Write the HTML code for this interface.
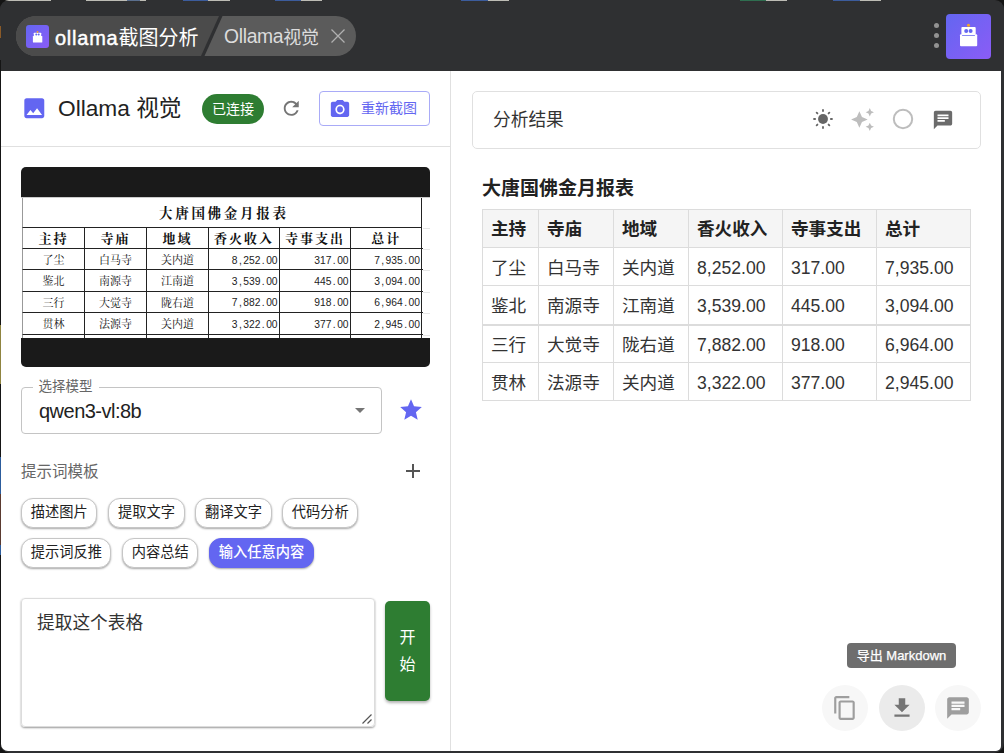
<!DOCTYPE html>
<html lang="zh-CN">
<head>
<meta charset="utf-8">
<title>Ollama视觉</title>
<style>
*{box-sizing:border-box;margin:0;padding:0}
html,body{width:1004px;height:753px;overflow:hidden;background:#141414}
body{font-family:"Liberation Sans","Noto Sans CJK SC",sans-serif;color:#333;position:relative}
.abs{position:absolute}
#win{position:absolute;left:0;top:0;width:1004px;height:753px;background:#2f3032;border-radius:9px 9px 10px 10px;overflow:hidden}
#topbleed{position:absolute;left:0;top:0;width:1004px;height:1px}
#titlebar{position:absolute;left:0;top:1px;width:1004px;height:70px;background:#2f3032;border-radius:9px 9px 0 0}
#content{position:absolute;left:1px;top:71px;width:1000px;height:680px;background:#fff;border-radius:0 0 5px 7px;overflow:hidden}
/* title pill */
#pill{position:absolute;left:16px;top:16px;width:340px;height:40px;border-radius:20px;background:#5b5b5b;overflow:hidden}
#pill .seg1{position:absolute;left:0;top:0;width:205px;height:40px;background:#4b4b4b;transform-origin:0 0}
#pill svg{position:absolute;left:0;top:0}
.t1{position:absolute;left:55px;top:23.600px;font-size:20px;line-height:28px;color:#fff;font-weight:400;white-space:nowrap}
.t1 b{font-weight:400;-webkit-text-stroke:0.45px #fff;letter-spacing:0.75px}
.t2{position:absolute;left:224px;top:24px;font-size:18px;line-height:26px;color:#dcdcdc;white-space:nowrap}
.t2 b{font-weight:400;font-size:19.300px;letter-spacing:-0.300px}
.t2 i{font-style:normal;position:relative;top:1px;letter-spacing:-0.300px}
#appico{position:absolute;left:26px;top:25px;width:23px;height:23px;border-radius:3px;background:linear-gradient(135deg,#6366f1,#8b5cf6)}
#bigico{position:absolute;left:946px;top:14px;width:45px;height:45px;border-radius:4px;background:linear-gradient(135deg,#6366f1,#8b5cf6)}
.dot{position:absolute;width:5.200px;height:5.200px;border-radius:50%;background:#929292;left:934.200px}
/* left panel */
#left{position:absolute;left:0;top:0;width:450px;height:680px;border-right:1px solid #e0e0e0}
#lhead{position:absolute;left:0;top:0;width:450px;height:76px;border-bottom:1px solid #e0e0e0}
.h1{position:absolute;left:57px;top:22px;font-size:22.700px;line-height:30px;color:#222;white-space:nowrap}
.badge{position:absolute;left:201px;top:23px;width:62px;height:30px;border-radius:15px;background:#2e7d32;color:#fff;font-size:14px;line-height:30px;text-align:center}
.btn-o{position:absolute;left:318px;top:20px;width:111px;height:35px;border:1px solid #a9abf7;border-radius:4px;color:#6366f1;font-size:14px;line-height:33px;padding-left:41px;white-space:nowrap}

#shot{position:absolute;left:20px;top:96px;width:409px;height:200px;border-radius:5px;background:#1a1a1a;overflow:hidden}
.sheet{position:absolute;left:0;top:30px;width:409px;height:141px;background:#fff;overflow:hidden;font-family:"Noto Serif CJK SC","Liberation Serif",serif;color:#111;border-top:1px solid #ccc}
.gl{position:absolute;left:401.500px;width:8px;height:1px;background:#e6e6e6}
.srow{position:relative;height:21.4px;white-space:nowrap;font-size:11px;line-height:20px;border-bottom:1px solid #222;width:400.500px;margin-left:1px;border-left:1px solid #999}
.stitle{height:29.700px;line-height:29px;font-size:13.500px;font-weight:700;letter-spacing:2.700px;text-align:left;padding-left:136px;border-right:1.500px solid #222;width:399.700px}
.shead{font-weight:700;font-size:13px;letter-spacing:2px}
.c{position:absolute;top:0;height:100%;border-right:1.5px solid #222;text-align:center;overflow:hidden}
.c1{left:0;width:62.100px}.c2{left:62.100px;width:62px}.c3{left:124.100px;width:62px}.c4{left:186.100px;width:71px}.c5{left:257.100px;width:71px}.c6{left:328.100px;width:71.400px}
.c.n{text-align:right;font-family:"Liberation Sans",sans-serif;font-size:10.300px;padding-right:1.500px;color:#222}
.c.n i{display:inline-block;font-style:normal;transform:scaleY(1.1);transform-origin:50% 50%;position:relative;top:1.500px}
.c.n u{display:inline-block;width:5.730px;text-align:center;text-decoration:none}
#sel{position:absolute;left:20px;top:316px;width:361px;height:47px;border:1px solid #c4c4c4;border-radius:4px}
#sel .lbl{position:absolute;left:10.500px;top:-10.500px;padding:0 6px;background:#fff;font-size:13.500px;line-height:18px;color:#666}
#sel .val{position:absolute;left:17px;top:9.500px;font-size:20px;letter-spacing:-0.520px;line-height:26px;color:#222}
.ptitle{position:absolute;left:20px;top:390px;font-size:15.500px;line-height:22px;color:#666}
.chip{position:absolute;height:30px;border:1px solid #c6c6c6;border-radius:12px;background:#fff;font-size:14.250px;line-height:27px;text-align:center;color:#222;box-shadow:0 1px 2px rgba(0,0,0,.35);white-space:nowrap}
.chip.on{background:#6366f1;border-color:#6366f1;color:#fff;font-weight:500}
#ta{position:absolute;left:20px;top:527px;width:354px;height:129px;border:1px solid #dcdcdc;border-radius:4px;box-shadow:0 1px 2px rgba(0,0,0,.4);font-size:17.700px;line-height:26px;padding:11px 15px;color:#333}
#go{position:absolute;left:384px;top:530px;width:45px;height:100px;border-radius:5px;background:#2e7d32;color:#fff;font-size:16px;line-height:27px;text-align:center;padding-top:23px;box-shadow:0 2px 3px rgba(0,0,0,.3)}

#right{position:absolute;left:0;top:0;width:1000px;height:680px}
#card{position:absolute;left:471px;top:20px;width:509px;height:58px;border:1px solid #e0e0e0;border-radius:5px;background:#fff}
#card .ct{position:absolute;left:20px;top:15px;font-size:17.700px;line-height:26px;color:#333}
.rtitle{position:absolute;left:481px;top:104px;font-size:19px;line-height:28px;font-weight:700;color:#222;white-space:nowrap}
#res{position:absolute;left:481px;top:138px;width:488px;border-collapse:collapse;table-layout:fixed;font-size:17.600px;color:#333}
#res th,#res td{border:1px solid #dcdcdc;height:38px;padding:0 0 0 8px;text-align:left;white-space:nowrap;line-height:26px}
#res td{padding-top:2px}
#res th{background:#f5f5f5;font-weight:700;color:#222}
#res tbody tr:nth-child(2) td{height:39px;border-bottom-width:2px}
#tip{position:absolute;left:846px;top:572px;width:109px;height:25px;border-radius:4px;background:#6e6e6e;color:#fff;-webkit-text-stroke:0.250px #fff;font-size:13px;line-height:25px;text-align:center;white-space:nowrap}
.fab{position:absolute;top:614px;width:46px;height:46px;border-radius:50%;background:#f7f7f7}
.fab.hov{background:#ebebeb}
.fab svg{position:absolute;left:10px;top:10px}
</style>
</head>
<body>
<div id="win">
<svg id="topbleed" width="1004" height="1" viewBox="0 0 1004 1"><rect x="4" y="0" width="47" height="1" fill="#bdbcb5"/><rect x="86" y="0" width="41" height="1" fill="#bdbcb5"/><rect x="127" y="0" width="13" height="1" fill="#5b6f8e"/><rect x="140" y="0" width="6" height="1" fill="#bdbcb5"/><rect x="183" y="0" width="25" height="1" fill="#3c5c9c"/><rect x="208" y="0" width="22" height="1" fill="#bdbcb5"/><rect x="275" y="0" width="26" height="1" fill="#3c5c9c"/><rect x="301" y="0" width="21" height="1" fill="#bdbcb5"/><rect x="461" y="0" width="27" height="1" fill="#3c5c9c"/><rect x="488" y="0" width="21" height="1" fill="#bdbcb5"/><rect x="740" y="0" width="26" height="1" fill="#2f6e50"/><rect x="766" y="0" width="21" height="1" fill="#bdbcb5"/><rect x="833" y="0" width="27" height="1" fill="#3c5c9c"/><rect x="860" y="0" width="21" height="1" fill="#bdbcb5"/></svg>
<div id="titlebar"></div>
<div id="pill">
<svg width="340" height="40"><polygon points="0,0 205,0 187,40 0,40" fill="#4b4b4b"/><polygon points="203,0 206.500,0 188.500,40 185,40" fill="#2f3032"/></svg></div>
<div id="appico"><svg width="23" height="23" viewBox="0 -0.7 23 23"><rect x="7.8" y="7" width="7.4" height="4" rx="0.6" fill="#fff"/><rect x="6.9" y="10.2" width="9.4" height="6.6" rx="0.6" fill="#fff"/><circle cx="11.5" cy="6.2" r="0.9" fill="#f5a623"/><circle cx="10.3" cy="8.9" r="1" fill="#6366f1"/><circle cx="12.7" cy="8.9" r="1" fill="#6366f1"/></svg></div>
<div class="t1"><b>ollama</b>截图分析</div>
<div class="t2"><b>Ollama</b><i>视觉</i></div>
<svg class="abs" style="left:331px;top:29px" width="14" height="14"><path d="M0.5 0.5L13.5 13.5M13.5 0.5L0.5 13.5" stroke="#b0b0b0" stroke-width="1.3" fill="none"/></svg>
<div class="dot" style="top:23px"></div><div class="dot" style="top:33px"></div><div class="dot" style="top:43px"></div>
<div id="bigico"><svg width="45" height="45" viewBox="0 0 45 45"><rect x="15.4" y="13" width="14.3" height="8" rx="1" fill="#fff"/><rect x="14" y="20.3" width="17.2" height="12" rx="1" fill="#fff"/><circle cx="22.5" cy="11.3" r="1.5" fill="#f5a623"/><circle cx="20.2" cy="17" r="2" fill="#6366f1"/><circle cx="24.6" cy="17" r="2" fill="#6366f1"/><rect x="16" y="21.2" width="13" height="0.9" rx="0.4" fill="#6366f1"/></svg></div>

<div class="abs" style="left:0;top:60px;width:1px;height:693px;background:#151515"></div>
<svg class="abs" style="left:0;top:0" width="1" height="753" viewBox="0 0 1 753"><rect x="0" y="26" width="1" height="12" fill="#8a5a28"/><rect x="0" y="325" width="1" height="59" fill="#8f8440"/><rect x="0" y="457" width="1" height="37" fill="#2c5c9c"/><rect x="0" y="494" width="1" height="51" fill="#5a3a30"/><rect x="0" y="545" width="1" height="10" fill="#2c5c9c"/></svg>
<div id="content">
 <div id="left">
  <div id="lhead">
   <svg class="abs" style="left:20px;top:24px" width="26.600" height="26.600" viewBox="0 0 24 24"><path fill="#6366f1" d="M21 19V5c0-1.1-.9-2-2-2H5c-1.1 0-2 .9-2 2v14c0 1.100.9 2 2 2h14c1.100 0 2-.9 2-2zM8.500 13.500l2.500 3.010L14.500 12l4.500 6H5l3.500-4.500z"/></svg>
   <div class="h1">Ollama 视觉</div>
   <div class="badge">已连接</div>
   <svg class="abs" style="left:279px;top:26.300px" width="22.500" height="22.500" viewBox="0 0 24 24"><path fill="#757575" d="M17.650 6.350C16.200 4.900 14.210 4 12 4c-4.420 0-7.990 3.580-7.990 8s3.570 8 7.990 8c3.730 0 6.840-2.550 7.730-6h-2.080c-.82 2.330-3.040 4-5.650 4-3.310 0-6-2.690-6-6s2.690-6 6-6c1.660 0 3.140.69 4.220 1.780L13 11h7V4l-2.350 2.350z"/></svg>
   <div class="btn-o"><svg class="abs" style="left:9px;top:5.500px" width="22" height="22.800" preserveAspectRatio="none" viewBox="0 0 24 24"><circle cx="12" cy="12" r="3.2" fill="#6366f1"/><path fill="#6366f1" d="M9 2L7.170 4H4c-1.100 0-2 .9-2 2v12c0 1.100.9 2 2 2h16c1.100 0 2-.9 2-2V6c0-1.100-.9-2-2-2h-3.170L15 2H9zm3 15c-2.760 0-5-2.240-5-5s2.240-5 5-5 5 2.240 5 5-2.240 5-5 5z"/></svg>重新截图</div>
  </div>
  <div id="shot">
   <div class="sheet"><div class="gl" style="top:29.5px"></div><div class="gl" style="top:51px"></div><div class="gl" style="top:72.4px"></div><div class="gl" style="top:93.8px"></div><div class="gl" style="top:115.2px"></div><div class="gl" style="top:136.6px"></div>
    <div class="srow stitle">大唐国佛金月报表</div>
    <div class="srow shead"><span class="c c1">主持</span><span class="c c2">寺庙</span><span class="c c3">地域</span><span class="c c4">香火收入</span><span class="c c5">寺事支出</span><span class="c c6">总计</span></div>
    <div class="srow"><span class="c c1">了尘</span><span class="c c2">白马寺</span><span class="c c3">关内道</span><span class="c c4 n"><i>8<u>,</u>252<u>.</u>00</i></span><span class="c c5 n"><i>317<u>.</u>00</i></span><span class="c c6 n"><i>7<u>,</u>935<u>.</u>00</i></span></div>
    <div class="srow"><span class="c c1">鉴北</span><span class="c c2">南源寺</span><span class="c c3">江南道</span><span class="c c4 n"><i>3<u>,</u>539<u>.</u>00</i></span><span class="c c5 n"><i>445<u>.</u>00</i></span><span class="c c6 n"><i>3<u>,</u>094<u>.</u>00</i></span></div>
    <div class="srow"><span class="c c1">三行</span><span class="c c2">大觉寺</span><span class="c c3">陇右道</span><span class="c c4 n"><i>7<u>,</u>882<u>.</u>00</i></span><span class="c c5 n"><i>918<u>.</u>00</i></span><span class="c c6 n"><i>6<u>,</u>964<u>.</u>00</i></span></div>
    <div class="srow"><span class="c c1">贯林</span><span class="c c2">法源寺</span><span class="c c3">关内道</span><span class="c c4 n"><i>3<u>,</u>322<u>.</u>00</i></span><span class="c c5 n"><i>377<u>.</u>00</i></span><span class="c c6 n"><i>2<u>,</u>945<u>.</u>00</i></span></div>
    <div class="srow slast"><span class="c c1"></span><span class="c c2"></span><span class="c c3"></span><span class="c c4"></span><span class="c c5"></span><span class="c c6"></span></div>
   </div>
  </div>
  <div id="sel"><span class="lbl">选择模型</span><span class="val">qwen3-vl:8b</span>
   <svg class="abs" style="left:326px;top:10px" width="24" height="24" viewBox="0 0 24 24"><path fill="#757575" d="M7 10l5 5 5-5z"/></svg>
  </div>
  <svg class="abs" style="left:397px;top:326px" width="26" height="26" viewBox="0 0 24 24"><path fill="#6366f1" d="M12 17.270L18.180 21l-1.640-7.030L22 9.240l-7.190-.61L12 2 9.190 8.630 2 9.240l5.460 4.730L5.820 21z"/></svg>
  <div class="ptitle">提示词模板</div>
  <svg class="abs" style="left:400px;top:388px" width="24" height="24" viewBox="0 0 24 24"><path fill="#555" d="M19 13h-6v6h-2v-6H5v-2h6V5h2v6h6v2z"/></svg>
  <div class="chip" style="left:20.200px;top:427px;width:76.300px">描述图片</div>
  <div class="chip" style="left:107.400px;top:427px;width:76.300px">提取文字</div>
  <div class="chip" style="left:194.300px;top:427px;width:76.300px">翻译文字</div>
  <div class="chip" style="left:281px;top:427px;width:76.300px">代码分析</div>
  <div class="chip" style="left:20.200px;top:467px;width:90.300px">提示词反推</div>
  <div class="chip" style="left:121.200px;top:467px;width:76.300px">内容总结</div>
  <div class="chip on" style="left:208.100px;top:467px;width:104.800px">输入任意内容</div>
  <div id="ta">提取这个表格<svg class="abs" style="right:1px;bottom:1px" width="12" height="12" viewBox="0 0 12 12"><path d="M1.500 10.500L10.500 1.500M6.500 10.500L10.500 6.500" stroke="#555" stroke-width="1.200" fill="none"/></svg></div>
  <div id="go">开<br>始</div>
 </div>
 <div id="right">
  <div id="card"><span class="ct">分析结果</span>
   <svg class="abs" style="left:339px;top:16px" width="22" height="22" viewBox="0 0 24 24"><circle cx="12" cy="12" r="5.400" fill="#666"/><g stroke="#666" stroke-width="2" stroke-linecap="round"><path d="M12 2.200v1.200M12 20.600v1.200M2.200 12h1.200M20.600 12h1.200M5.070 5.070l.85.85M18.080 18.080l.85.85M18.930 5.070l-.85.85M5.920 18.080l-.85.85"/></g></svg>
   <svg class="abs" style="left:377px;top:15px" width="25" height="25" viewBox="0 0 24 24"><path fill="#bdbdbd" d="M19 9l1.250-2.750L23 5l-2.750-1.250L19 1l-1.250 2.750L15 5l2.750 1.250L19 9zm-7.500.5L9 4 6.500 9.500 1 12l5.500 2.500L9 20l2.500-5.500L17 12l-5.500-2.500zM19 15l-1.250 2.750L15 19l2.750 1.250L19 23l1.250-2.750L23 19l-2.750-1.250L19 15z"/></svg>
   <svg class="abs" style="left:417.500px;top:15px" width="24" height="24" viewBox="0 0 24 24"><circle cx="12" cy="12" r="9.200" fill="none" stroke="#bdbdbd" stroke-width="2"/></svg>
   <svg class="abs" style="left:459px;top:17px" width="22" height="22" viewBox="0 0 24 24"><path fill="#6b6b6b" d="M20 2H4c-1.100 0-1.990.9-1.990 2L2 22l4-4h14c1.100 0 2-.9 2-2V4c0-1.100-.9-2-2-2zM6 9h12v2H6V9zm8 5H6v-2h8v2zm4-6H6V6h12v2z"/></svg>
  </div>
  <div class="rtitle">大唐国佛金月报表</div>
  <table id="res"><colgroup><col style="width:56px"><col style="width:75px"><col style="width:75px"><col style="width:94px"><col style="width:94px"><col style="width:94px"></colgroup>
<thead><tr><th>主持</th><th>寺庙</th><th>地域</th><th>香火收入</th><th>寺事支出</th><th>总计</th></tr></thead>
<tbody>
<tr><td>了尘</td><td>白马寺</td><td>关内道</td><td>8,252.00</td><td>317.00</td><td>7,935.00</td></tr>
<tr><td>鉴北</td><td>南源寺</td><td>江南道</td><td>3,539.00</td><td>445.00</td><td>3,094.00</td></tr>
<tr><td>三行</td><td>大觉寺</td><td>陇右道</td><td>7,882.00</td><td>918.00</td><td>6,964.00</td></tr>
<tr><td>贯林</td><td>法源寺</td><td>关内道</td><td>3,322.00</td><td>377.00</td><td>2,945.00</td></tr>
</tbody></table>
  <div id="tip">导出 Markdown</div>
  <div class="fab" style="left:821px"><svg width="26" height="26" viewBox="0 0 24 24"><path fill="#9e9e9e" d="M16 1H4c-1.100 0-2 .9-2 2v14h2V3h12V1zm3 4H8c-1.100 0-2 .9-2 2v14c0 1.100.9 2 2 2h11c1.100 0 2-.9 2-2V7c0-1.100-.9-2-2-2zm0 16H8V7h11v14z"/></svg></div>
  <div class="fab hov" style="left:878px"><svg width="26" height="26" viewBox="0 0 24 24"><path fill="#757575" d="M19 9h-4V3H9v6H5l7 7 7-7zM5 18v2h14v-2H5z"/></svg></div>
  <div class="fab" style="left:934px"><svg width="26" height="26" viewBox="0 0 24 24"><path fill="#9e9e9e" d="M20 2H4c-1.100 0-1.990.9-1.990 2L2 22l4-4h14c1.100 0 2-.9 2-2V4c0-1.100-.9-2-2-2zM6 9h12v2H6V9zm8 5H6v-2h8v2zm4-6H6V6h12v2z"/></svg></div>
 </div>
</div>
</div>
</body>
</html>
